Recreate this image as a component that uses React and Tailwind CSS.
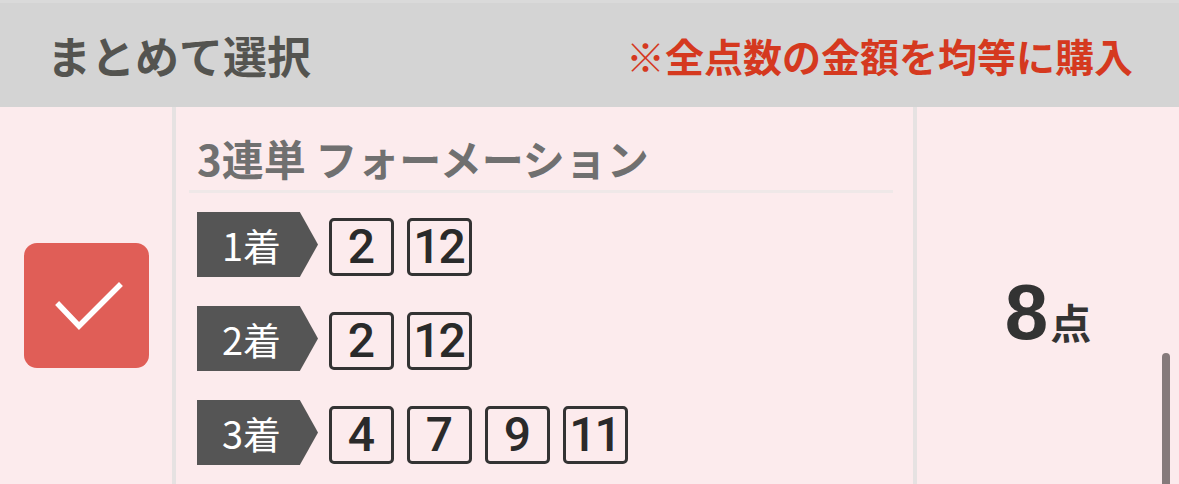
import React from 'react';

const jp = { fontFamily: '"Noto Sans CJK JP", "Noto Sans", sans-serif' };
const num = { fontFamily: '"Liberation Sans", Arial, sans-serif' };
const boxNum = { fontFamily: 'Roboto, "Liberation Sans", sans-serif' };

const picks = [
    { label: '1着', nums: ['2', '12'] },
    { label: '2着', nums: ['2', '12'] },
    { label: '3着', nums: ['4', '7', '9', '11'] },
];

function CheckBox() {
    return (
        <div className="w-[125px] h-[125px] rounded-[13px] bg-[#e05e57] flex items-center justify-center">
            <svg width="125" height="125" viewBox="0 0 125 125" fill="none">
                <path d="M35 62 L55 83 L95 43" stroke="#ffffff" strokeWidth="5.5" strokeLinecap="square" />
            </svg>
        </div>
    );
}

function PlaceRow({ label, nums }) {
    return (
        <div className="flex items-center h-[65px]">
            <div
                className="w-[121px] h-[65px] bg-[#555555] text-white text-[38px] leading-none flex items-center pl-[25px] [clip-path:polygon(0_0,85%_0,100%_50%,85%_100%,0_100%)]"
                style={jp}
            >
                {label}
            </div>
            <div className="flex gap-[13px] ml-[11px] mt-[4px]">
                {nums.map((n, i) => (
                    <div
                        key={i}
                        className="w-[65px] h-[58px] border-[3px] border-[#333333] rounded-[5px] flex items-center justify-center text-[48px] font-medium text-[#2a2a2a] leading-none tracking-[-2px] pr-[2px]"
                        style={boxNum}
                    >
                        {n}
                    </div>
                ))}
            </div>
        </div>
    );
}

export default function App() {
    return (
        <div className="relative w-full h-[484px] overflow-hidden bg-[#fcebed]">
            <div className="h-[107px] bg-[#d4d4d4] border-t-[3px] border-[#dadada] flex items-center justify-between pl-[47px] pr-[46px]" style={jp}>
                <span className="text-[44px] font-bold text-[#545450] leading-none">まとめて選択</span>
                <span className="text-[39px] font-bold text-[#d5391f] leading-none">※全点数の金額を均等に購入</span>
            </div>

            <div className="flex h-[397px]">
                <div className="w-[172px] flex items-center justify-center">
                    <CheckBox />
                </div>
                <div className="w-[4px] bg-[#e6e2e2]"></div>
                <div className="w-[737px] pl-[21px] pr-[20px] pt-[30px]">
                    <div className="text-[42px] font-bold text-[#707070] leading-none" style={jp}>
                        3連単 フォーメーション
                    </div>
                    <div className="h-[3px] bg-[#efe8e8] mt-[11px] -ml-[8px]"></div>
                    <div className="flex flex-col gap-[29px] mt-[19px]">
                        {picks.map((p) => (
                            <PlaceRow key={p.label} label={p.label} nums={p.nums} />
                        ))}
                    </div>
                </div>
                <div className="w-[4px] bg-[#e6e2e2]"></div>
                <div className="flex-1 flex items-center justify-center">
                    <div className="flex items-baseline text-[#333333] mt-[12px]">
                        <span className="text-[78px] font-bold leading-none" style={num}>8</span>
                        <span className="text-[41px] font-bold leading-none ml-[2px]" style={jp}>点</span>
                    </div>
                </div>
            </div>

            <div className="absolute right-[9px] top-[353px] w-[8px] h-[150px] rounded-full bg-[#857a7b]"></div>
        </div>
    );
}
